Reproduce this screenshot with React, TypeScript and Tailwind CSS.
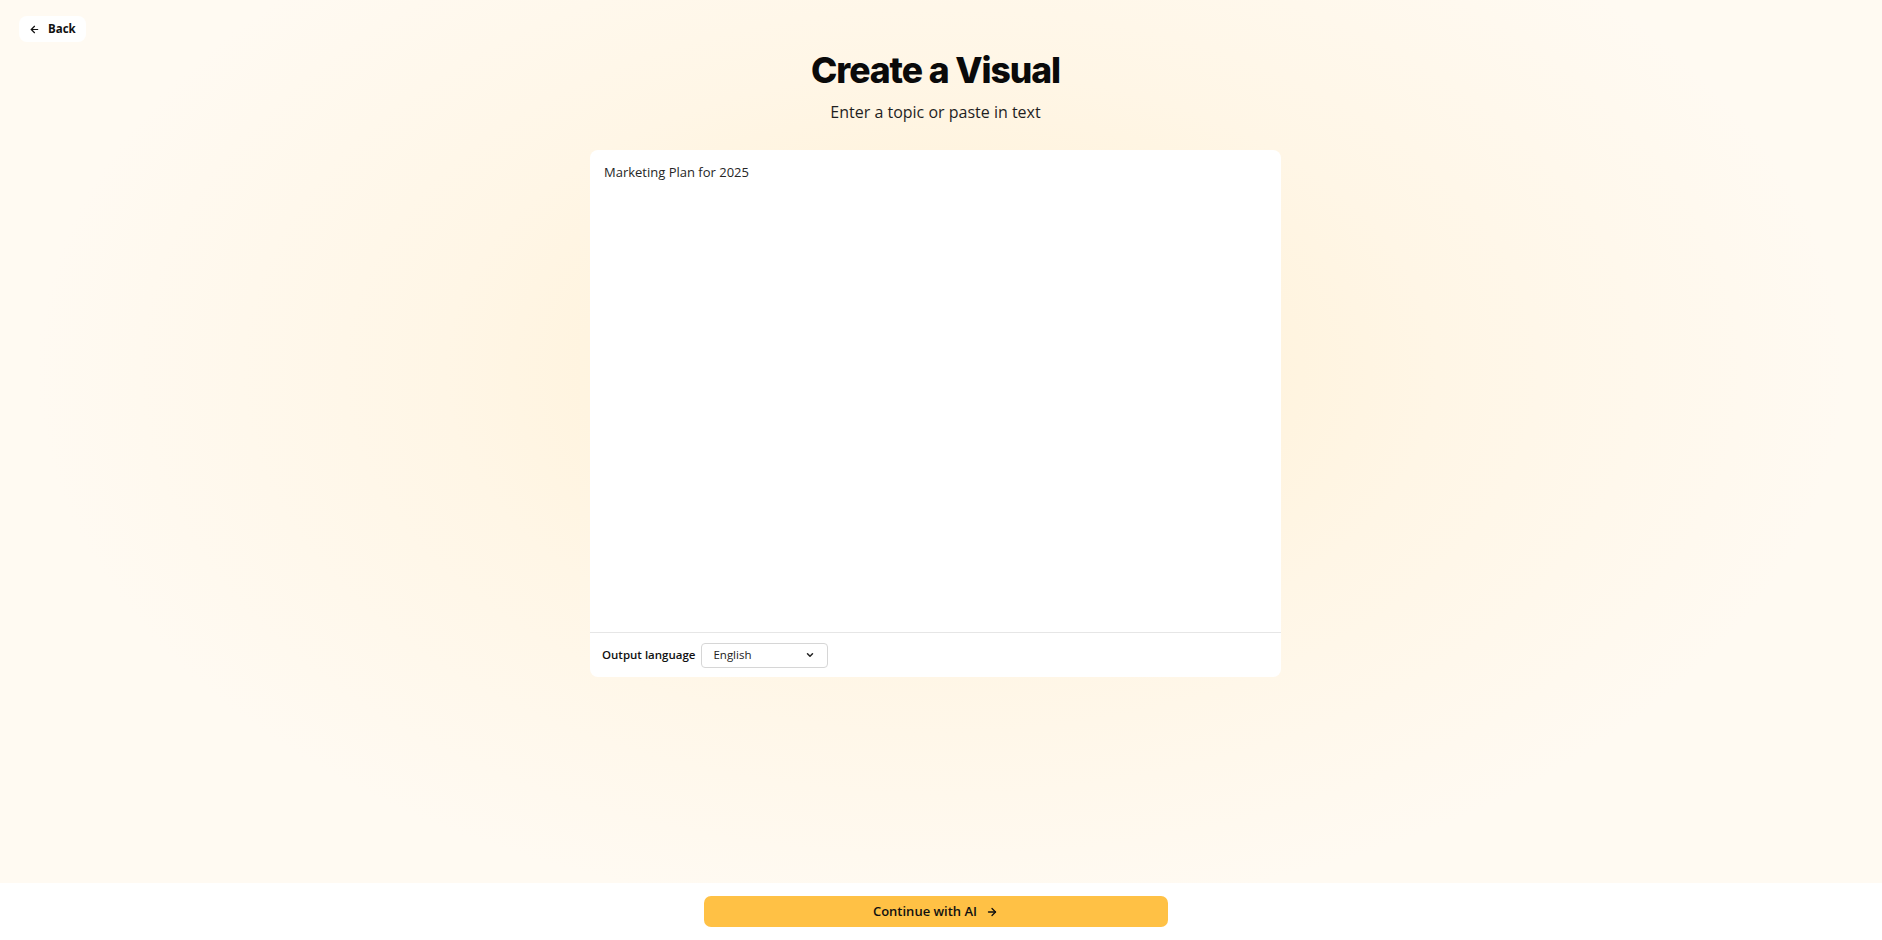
import React, { useState } from "react";

const ArrowLeft = () => (
  <svg width="11" height="11" viewBox="0 0 24 24" fill="none" stroke="currentColor" strokeWidth="2.6" strokeLinecap="round" strokeLinejoin="round">
    <path d="M19 12H5" />
    <path d="M12 19l-7-7 7-7" />
  </svg>
);

const ArrowRight = () => (
  <svg width="12" height="12" viewBox="0 0 24 24" fill="none" stroke="currentColor" strokeWidth="2.6" strokeLinecap="round" strokeLinejoin="round">
    <path d="M5 12h14" />
    <path d="M12 5l7 7-7 7" />
  </svg>
);

const Chevron = () => (
  <svg width="10" height="10" viewBox="0 0 24 24" fill="none" stroke="currentColor" strokeWidth="3.6" strokeLinecap="round" strokeLinejoin="round">
    <path d="M6 9l6 6 6-6" />
  </svg>
);

export default function App() {
  const [topic, setTopic] = useState("Marketing Plan for 2025");

  return (
    <div className="h-screen w-full flex flex-col font-['Open_Sans',sans-serif] text-[#111]">
      <main className="flex-1 flex flex-col bg-[radial-gradient(ellipse_48%_62%_at_50%_42%,#ffefd0_0%,#fff6e6_55%,#fffaf2_100%)] pt-[16px] pl-[19px] pr-[11px]">
        <div className="flex">
          <button className="h-[26px] flex items-center gap-[8px] pl-[10px] pr-[10px] bg-white rounded-[8px] text-[11.5px] font-bold text-[#111]">
            <ArrowLeft />
            Back
          </button>
        </div>

        <div className="flex flex-col items-center pr-[19px]">
          <h1 className="mt-[6px] font-['Inter',sans-serif] font-extrabold text-[35.5px] leading-[46px] tracking-[-0.03em] text-[#0a0a0a]">
            Create a Visual
          </h1>
          <p className="mt-[7px] text-[16px] leading-[22px] text-[#1f1f1f]">Enter a topic or paste in text</p>

          <div className="mt-[27px] w-[691px] h-[527px] bg-white rounded-[8px] flex flex-col overflow-hidden">
            <textarea
              value={topic}
              onChange={(e) => setTopic(e.target.value)}
              className="flex-1 resize-none outline-none px-[14px] pt-[12px] text-[13px] leading-[20px] text-[#262626] bg-transparent"
            />
            <div className="h-[45px] border-t border-[#e6e6e6] flex items-center gap-[6px] pl-[12px]">
              <span className="text-[11.5px] font-semibold text-[#111]">Output language</span>
              <button className="w-[127px] h-[25px] border border-[#d6d6d6] rounded-[4px] flex items-center justify-between pl-[11px] pr-[12px] text-[11.5px] text-[#222]">
                English
                <Chevron />
              </button>
            </div>
          </div>
        </div>
      </main>

      <footer className="h-[57px] bg-white flex justify-center pt-[13px] pr-[11px]">
        <button className="w-[464px] h-[31px] rounded-[7px] bg-[#ffc145] flex items-center justify-center gap-[9px] text-[13px] font-semibold text-[#111]">
          Continue with AI
          <ArrowRight />
        </button>
      </footer>
    </div>
  );
}
